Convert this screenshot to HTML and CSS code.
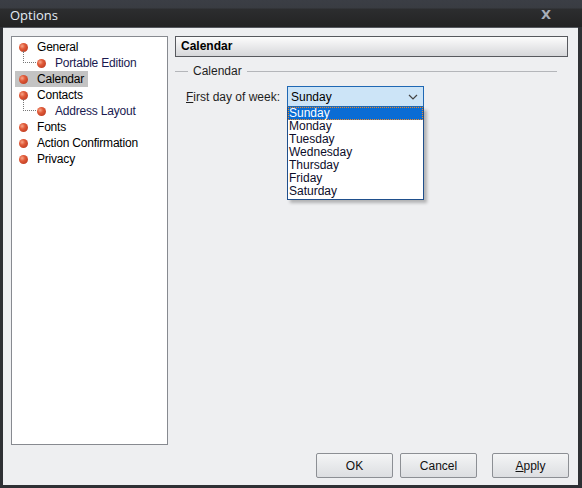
FILE: index.html
```html
<!DOCTYPE html>
<html lang="en">
<head>
    <meta charset="UTF-8">
    <title>Options</title>
<link rel="stylesheet" href="styles.css">
</head>
<body>

<div class="window">
    <div class="titlebar">
        <span class="title">Options</span>
        <span class="close">X</span>
    </div>

    <div class="client">
        <div class="main">
            <ul class="tree">
                <li class="node"><i class="ball"></i>General</li>
                <li class="node child"><i class="branch"></i><i class="ball"></i>Portable Edition</li>
                <li class="node"><span class="sel"><i class="ball"></i>Calendar</span></li>
                <li class="node"><i class="ball"></i>Contacts</li>
                <li class="node child"><i class="branch"></i><i class="ball"></i>Address Layout</li>
                <li class="node"><i class="ball"></i>Fonts</li>
                <li class="node"><i class="ball"></i>Action Confirmation</li>
                <li class="node"><i class="ball"></i>Privacy</li>
            </ul>

            <div class="page">
                <div class="heading">Calendar</div>

                <div class="group">
                    <span class="group_label">Calendar</span>
                </div>

                <div class="field">
                    <label class="lbl"><u>F</u>irst day of week:</label>
                    <div class="combo">
                        <div class="combo_box">
                            <span>Sunday</span>
                            <svg class="arrow" width="10" height="6" viewBox="0 0 10 6">
                                <path d="M1 1 L5 5 L9 1" fill="none" stroke="#444" stroke-width="1.2"/>
                            </svg>
                        </div>
                        <ul class="combo_list">
                            <li class="hl">Sunday</li>
                            <li>Monday</li>
                            <li>Tuesday</li>
                            <li>Wednesday</li>
                            <li>Thursday</li>
                            <li>Friday</li>
                            <li>Saturday</li>
                        </ul>
                    </div>
                </div>
            </div>
        </div>

        <div class="buttons">
            <button class="btn">OK</button>
            <button class="btn">Cancel</button>
            <button class="btn btn_apply"><u>A</u>pply</button>
        </div>
    </div>
</div>

</body>
</html>
```

FILE: styles.css
```css
body {
  margin: 0;
  background-color: #2b2c30;
  font-family: 'Liberation Sans', Arial, sans-serif;
  font-size: 12px;
  color: #000;
}

.window {
  width: 582px;
  height: 488px;
  display: flex;
  flex-direction: column;
  background: #2e3034;
}

.titlebar {
  height: 28px;
  display: flex;
  align-items: center;
  justify-content: space-between;
  padding: 0 31px 0 10px;
  background: linear-gradient(#3b3e45 0px, #393c42 8px, #2c2d2f 9px, #232323 28px);
  box-sizing: border-box;
}

.title {
  color: #e4ecf4;
  font-family: 'Open Sans', 'DejaVu Sans', sans-serif;
  font-size: 13px;
  padding-top: 2px;
}

.close {
  color: #a8adb8;
  font-family: 'DejaVu Sans', sans-serif;
  font-size: 13px;
  font-weight: bold;
  padding-top: 2px;
}

.client {
  flex: 1;
  margin: 0 4px 3px 3px;
  background: #eeeff1;
  border-top: 1px solid #55585e;
  display: flex;
  flex-direction: column;
}

.main {
  flex: 1;
  display: flex;
  gap: 7px;
  padding: 8px 10px 0 8px;
}

.tree {
  list-style: none;
  margin: 0;
  padding: 2px 0 0 0;
  width: 155px;
  height: 405px;
  background: #fff;
  border: 1px solid #878a90;
}

.node {
  height: 16px;
  display: flex;
  align-items: center;
  padding-left: 7px;
  position: relative;
  font-size: 12px;
  letter-spacing: -0.2px;
}

.ball {
  width: 9px;
  height: 9px;
  border-radius: 50%;
  margin-right: 9px;
  background: radial-gradient(circle at 35% 35%, #f7a68a 0, #e05a38 35%, #b0301a 100%);
}

.child {
  padding-left: 25px;
  color: #1a1a50;
}

.branch {
  position: absolute;
  left: 11px;
  top: -4px;
  width: 12px;
  height: 11px;
  border-left: 1px dotted #777;
  border-bottom: 1px dotted #777;
}

.sel {
  display: flex;
  align-items: center;
  height: 16px;
  background: #c3c3c3;
  padding: 0 4px 0 4px;
  margin-left: -4px;
}

.page {
  flex: 1;
  display: flex;
  flex-direction: column;
}

.heading {
  height: 19px;
  line-height: 19px;
  padding-left: 5px;
  font-weight: bold;
  font-size: 12px;
  border: 1px solid #57595e;
  background: linear-gradient(#fcfcfc, #d6d7da);
}

.group {
  display: flex;
  align-items: center;
  margin: 7px 11px 0 0;
  height: 14px;
}

.group::before,
.group::after {
  content: '';
  border-top: 1px solid #b4b6ba;
  height: 0;
}

.group::before {
  width: 13px;
}

.group::after {
  flex: 1;
}

.group_label {
  padding: 0 5px;
  color: #1e1e1e;
}

.field {
  display: flex;
  align-items: center;
  margin: 8px 0 0 11px;
}

.lbl {
  width: 101px;
  color: #1e1e1e;
}

.combo {
  position: relative;
}

.combo_box {
  display: flex;
  align-items: center;
  justify-content: space-between;
  padding: 0 5px 0 3px;
  box-sizing: border-box;
  width: 137px;
  height: 21px;
  background: #cce4f7;
  border: 1px solid #1f68b4;
}

.arrow {
  margin-top: 1px;
}

.combo_list {
  position: absolute;
  left: 0;
  top: 21px;
  width: 135px;
  margin: 0;
  padding: 0 0 1px 0;
  list-style: none;
  background: #fff;
  border: 1px solid #1f4f8c;
  border-top: none;
  box-shadow: 3px 3px 3px rgba(0, 0, 0, 0.25);
}

.combo_list li {
  height: 13px;
  line-height: 13px;
  padding-left: 1px;
  color: #0d0d2a;
}

.combo_list .hl {
  background: #0a6cd4;
  color: #fff;
  outline: 1px dotted #f08a24;
  outline-offset: -1px;
}

.buttons {
  display: flex;
  justify-content: flex-end;
  padding: 8px 9px 7px 0;
}

.btn {
  width: 77px;
  height: 25px;
  margin-left: 7px;
  font-family: 'Liberation Sans', Arial, sans-serif;
  font-size: 12px;
  color: #111;
  border: 1px solid #8c8f94;
  border-radius: 2px;
  background: linear-gradient(#f4f5f6, #dcdee1);
}

.btn_apply {
  margin-left: 15px;
}
```
